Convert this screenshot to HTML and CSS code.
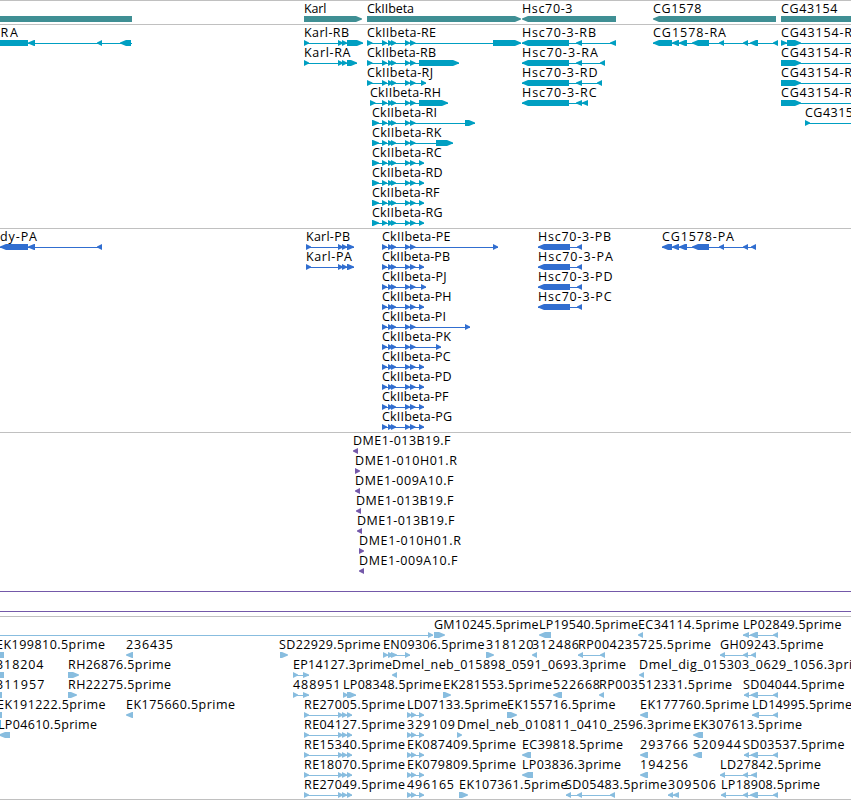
FILE: index.html
```
<!DOCTYPE html>
<html lang="en">
<head>
    <meta charset="UTF-8">
    <title>Genome browser</title>
    <link rel="stylesheet" href="styles.css">
</head>
<body>
    <div class="browser">
        <div class="track genes" id="genes"></div>
        <div class="track transcripts" id="transcripts"></div>
        <div class="track proteins" id="proteins"></div>
        <div class="track primers" id="primers"></div>
        <div class="track ests" id="ests"></div>
    </div>
    <script src="tracks.js"></script>
</body>
</html>
```
FILE: styles.css
```
body {
    margin: 0;
    background-color: #ffffff;
}
.browser {
    display: flex;
    flex-direction: column;
    width: 851px;
    height: 799px;
    border-bottom: 1px solid #c0c0c0;
    overflow: hidden;
}
.track {
    box-sizing: border-box;
    flex: none;
    border-top: 1px solid #c0c0c0;
    overflow: hidden;
}
.track svg {
    display: block;
    width: 851px;
    height: 100%;
}
.track text {
    font-family: "Open Sans", "Noto Sans", sans-serif;
    font-size: 12.5px;
    fill: #000000;
}
.genes {
    height: 24px;
    color: #3f8f94;
}
.transcripts {
    height: 204px;
    color: #009fc2;
}
.proteins {
    height: 204px;
    color: #316ed0;
}
.primers {
    height: 184px;
    color: #7459a9;
}
.ests {
    height: 183px;
    color: #88bddf;
}
.glyph {
    fill: currentColor;
}
```
FILE: tracks.js
```
// feature: [row, label, label start, label end, strand, exons, line start, line end]
// strand: 1 forward, -1 reverse, 0 no arrow head
var ckExons = [[382, 387], [388, 393], [391, 396], [405, 410], [410, 415.5]];
var reExons = [[304, 309], [338, 343], [342, 347], [347, 352]];
var ldExons = [[407, 412], [411, 416], [419, 424]];
var sdExons = [[744, 749], [750.5, 758], [773, 778]];

function ck(first, last) {
    return (first ? [first] : []).concat(ckExons, [last]);
}

var tracks = {
    genes: [
        [0, '', 0, 0, 0, [[0, 132]]],
        [0, 'Karl', 304, 326.5, 1, [[304, 362]]],
        [0, 'CkIIbeta', 367, 414, 1, [[367, 521]]],
        [0, 'Hsc70-3', 522, 572.5, -1, [[522, 616]]],
        [0, 'CG1578', 653, 701.5, -1, [[653, 776]]],
        [0, 'CG43154', 781, 837.5, 0, [[781, 851]]]
    ],
    transcripts: [
        [0, 'RA', 0.5, 18, -1, [[-10, 28], [28, 35], [97, 102], [120, 131]], 0, 132],
        [0, 'Karl-RB', 304, 349, 1, [[304, 309], [338, 343], [342, 347], [347, 363]]],
        [1, 'Karl-RA', 304, 350.5, 1, [[304, 309], [338, 343], [342, 347], [347, 357]]],
        [0, 'CkIIbeta-RE', 367, 436, 1, ck([367, 372.5], [493, 521])],
        [1, 'CkIIbeta-RB', 367, 436, 1, ck([367, 372.5], [419, 459])],
        [2, 'CkIIbeta-RJ', 367, 433, 1, ck([367, 372.5], [421, 426])],
        [3, 'CkIIbeta-RH', 370, 441, 1, ck([370, 375.5], [419, 448])],
        [4, 'CkIIbeta-RI', 372, 437, 1, ck([372, 379], [465, 475])],
        [5, 'CkIIbeta-RK', 372, 441.5, 1, ck([372, 379], [436, 453])],
        [6, 'CkIIbeta-RC', 372, 441.5, 1, ck([372, 379], [419, 424])],
        [7, 'CkIIbeta-RD', 372, 442.5, 1, ck([372, 379], [419, 424])],
        [8, 'CkIIbeta-RF', 372, 439.5, 1, ck([372, 379], [419, 424])],
        [9, 'CkIIbeta-RG', 372, 442.5, 1, ck([372, 379], [419, 424])],
        [0, 'Hsc70-3-RB', 522, 596, -1, [[522, 569], [576, 582], [610, 616]]],
        [1, 'Hsc70-3-RA', 522, 598, -1, [[522, 569], [576, 582], [600, 605]]],
        [2, 'Hsc70-3-RD', 522, 597.5, -1, [[522, 569], [576, 582], [597, 602]]],
        [3, 'Hsc70-3-RC', 522, 596.5, -1, [[522, 569], [576, 582], [582, 588]]],
        [0, 'CG1578-RA', 653, 726, -1, [[653, 672], [672, 679], [679, 687], [692, 709], [719, 724], [743, 748], [750, 758], [773, 778]]],
        [0, 'CG43154-R', 781, 852, 1, [[781, 787], [787, 801]], 781, 851],
        [1, 'CG43154-R', 781, 852, 1, [[781, 801]], 781, 851],
        [2, 'CG43154-R', 781, 852, 1, [[781, 801]], 781, 851],
        [3, 'CG43154-R', 781, 852, 1, [[781, 801]], 781, 851],
        [4, 'CG4315', 805, 853, 1, [[805, 810]], 805, 851]
    ],
    proteins: [
        [0, 'dy-PA', 0, 37, -1, [[0, 28], [28, 35], [97, 102]]],
        [0, 'Karl-PB', 306, 350, 1, [[306, 311], [338, 343], [342, 347], [347, 354]]],
        [1, 'Karl-PA', 306, 352, 1, [[306, 311], [338, 343], [342, 347], [347, 354]]],
        [0, 'CkIIbeta-PE', 382, 450.5, 1, ck(null, [493, 498])],
        [1, 'CkIIbeta-PB', 382, 450, 1, ck(null, [419, 424])],
        [2, 'CkIIbeta-PJ', 382, 446.5, 1, ck(null, [421, 426])],
        [3, 'CkIIbeta-PH', 382, 451.5, 1, ck(null, [419, 424])],
        [4, 'CkIIbeta-PI', 382, 446, 1, ck(null, [465, 470])],
        [5, 'CkIIbeta-PK', 382, 451, 1, ck(null, [436, 441])],
        [6, 'CkIIbeta-PC', 382, 450.5, 1, ck(null, [419, 424])],
        [7, 'CkIIbeta-PD', 382, 451.5, 1, ck(null, [419, 424])],
        [8, 'CkIIbeta-PF', 382, 448.5, 1, ck(null, [419, 424])],
        [9, 'CkIIbeta-PG', 382, 452, 1, ck(null, [419, 424])],
        [0, 'Hsc70-3-PB', 538, 611, -1, [[538, 570], [577, 582]]],
        [1, 'Hsc70-3-PA', 538, 613, -1, [[538, 570], [577, 582]]],
        [2, 'Hsc70-3-PD', 538, 612.5, -1, [[538, 570], [577, 582]]],
        [3, 'Hsc70-3-PC', 538, 611.5, -1, [[538, 570], [577, 582]]],
        [0, 'CG1578-PA', 662, 734, -1, [[662, 672], [672, 679], [679, 687], [692, 709], [719, 724], [743, 748], [751, 756]]]
    ],
    primers: [
        [0, 'DME1-013B19.F', 353, 450.5, -1, [[353, 358]]],
        [1, 'DME1-010H01.R', 355, 457, 1, [[355, 360]]],
        [2, 'DME1-009A10.F', 355, 453.5, -1, [[355, 360]]],
        [3, 'DME1-013B19.F', 356, 453.5, -1, [[356, 361]]],
        [4, 'DME1-013B19.F', 357, 454.5, -1, [[357, 362]]],
        [5, 'DME1-010H01.R', 359, 461, 1, [[359, 364]]],
        [6, 'DME1-009A10.F', 359, 457.5, -1, [[359, 364]]],
        [7, '', 0, 0, 0, [], 0, 851],
        [8, '', 0, 0, 0, [], 0, 851]
    ],
    ests: [
        [0, '', 0, 0, 1, [[428, 433]], 0, 433],
        [0, 'GM10245.5prime', 434, 538.5, 1, [[434, 445]]],
        [0, 'LP19540.5prime', 539, 638, -1, [[539, 551]]],
        [0, 'EC34114.5prime', 638, 739, -1, [[638, 643]]],
        [0, 'LP02849.5prime', 743, 841.5, -1, [[743, 749], [750, 758], [773, 778]]],
        [1, 'EK199810.5prime', -4, 105, -1, [[-8, 4]]],
        [1, '236435', 126, 173, -1, [[126, 133]]],
        [1, 'SD22929.5prime', 279, 380.5, 1, [[280, 288]]],
        [1, 'EN09306.5prime', 383, 484.5, 1, [[383, 388], [388, 394], [391, 397], [405, 410]]],
        [1, '318120', 486, 533.5, 1, [[486, 494]]],
        [1, '312486', 532, 579, -1, [[532, 537]]],
        [1, 'RP004235725.5prime', 578, 711, -1, [[578, 583], [600, 605]]],
        [1, 'GH09243.5prime', 720, 823.5, -1, [[720, 725], [743, 748], [751, 756]]],
        [2, '318204', -4, 43.5, -1, [[-8, 4]]],
        [2, 'RH26876.5prime', 68, 171, 1, [[68, 79]]],
        [2, 'EP14127.3prime', 293, 392, 1, [[293, 298], [303, 309]]],
        [2, 'Dmel_neb_015898_0591_0693.3prime', 392, 626, -1, [[392, 397]]],
        [2, 'Dmel_dig_015303_0629_1056.3prime', 639, 872, -1, [[639, 644]]],
        [3, '311957', -4, 44.5, -1, [[-8, 2]]],
        [3, 'RH22275.5prime', 68, 171, 1, [[68, 77]]],
        [3, '488951', 293, 340.5, 1, [[293, 298], [303, 309]]],
        [3, 'LP08348.5prime', 343, 441.5, 1, [[343, 348], [347, 356]]],
        [3, 'EK281553.5prime', 443, 552, 1, [[443, 451]]],
        [3, '522668', 553, 600, -1, [[553, 562]]],
        [3, 'RP003512331.5prime', 599, 732, -1, [[599, 604]]],
        [3, 'SD04044.5prime', 743, 844.5, -1, sdExons],
        [4, 'EK191222.5prime', -3, 105.5, -1, [[-8, 2]]],
        [4, 'EK175660.5prime', 126, 235, -1, [[126, 133]]],
        [4, 'RE27005.5prime', 304, 405, 1, reExons],
        [4, 'LD07133.5prime', 407, 507.5, 1, ldExons],
        [4, 'EK155716.5prime', 507, 615.5, 1, [[507, 517]]],
        [4, 'EK177760.5prime', 640, 749, -1, [[640, 648]]],
        [4, 'LD14995.5prime', 752, 852, -1, [[752, 759], [773, 778]]],
        [5, 'LP04610.5prime', -2, 97, -1, [[-1, 10]]],
        [5, 'RE04127.5prime', 304, 405, 1, reExons],
        [5, '329109', 407, 455, 1, ldExons],
        [5, 'Dmel_neb_010811_0410_2596.3prime', 457, 691, 1, [[457, 462]]],
        [5, 'EK307613.5prime', 693, 802, -1, [[693, 703]]],
        [6, 'RE15340.5prime', 304, 405, 1, reExons],
        [6, 'EK087409.5prime', 407, 516, 1, ldExons],
        [6, 'EC39818.5prime', 522, 623, -1, [[522, 531]]],
        [6, '293766', 640, 688, -1, [[640, 648]]],
        [6, '520944', 693, 741, -1, [[693, 702]]],
        [6, 'SD03537.5prime', 743, 844.5, -1, sdExons],
        [7, 'RE18070.5prime', 304, 405, 1, reExons],
        [7, 'EK079809.5prime', 407, 516, 1, ldExons],
        [7, 'LP03836.3prime', 522, 621, -1, [[522, 533]]],
        [7, '194256', 640, 688, -1, [[640, 648]]],
        [7, 'LD27842.5prime', 720, 821, -1, [[720, 725], [743, 748], [751, 757]]],
        [8, 'RE27049.5prime', 304, 405, 1, reExons],
        [8, '496165', 407, 454, 1, ldExons],
        [8, 'EK107361.5prime', 459, 567.5, 1, [[459, 468]]],
        [8, 'SD05483.5prime', 565, 667, -1, [[566, 571], [577, 582], [610, 615]]],
        [8, '309506', 668, 716, -1, [[668, 673], [673, 679]]],
        [8, 'LP18908.5prime', 721, 820, -1, [[721, 726], [743, 748], [750, 758], [773, 778]]]
    ]
};

var ROW = 20;
var HEAD = 6;

function add(svg, name, attrs) {
    var el = document.createElementNS('http://www.w3.org/2000/svg', name);
    for (var key in attrs) {
        el.setAttribute(key, attrs[key]);
    }
    svg.appendChild(el);
    return el;
}

function drawExon(svg, a, b, y, strand) {
    var h = Math.min(HEAD, b - a);
    var points;
    if (strand < 0) {
        points = [[b, y], [a + h, y], [a, y + 2.5], [a, y + 3.5], [a + h, y + 6], [b, y + 6]];
    } else if (strand > 0) {
        points = [[a, y], [b - h, y], [b, y + 2.5], [b, y + 3.5], [b - h, y + 6], [a, y + 6]];
    } else {
        points = [[a, y], [b, y], [b, y + 6], [a, y + 6]];
    }
    add(svg, 'polygon', { 'class': 'glyph', points: points.join(' ') });
}

function drawTrack(id) {
    var svg = add(document.getElementById(id), 'svg', {});
    tracks[id].forEach(function (f) {
        // the track's top border takes the first pixel
        var top = f[0] * ROW - 1;
        var exons = f[5];
        var from = f[6] !== undefined ? f[6] : exons[0][0];
        var to = f[7] !== undefined ? f[7] : exons[exons.length - 1][1];
        if (exons.length !== 1 || f[6] !== undefined) {
            add(svg, 'rect', { 'class': 'glyph', x: from, y: top + 19, width: to - from, height: 1 });
        }
        exons.forEach(function (e) {
            drawExon(svg, e[0], e[1], top + 16, f[4]);
        });
        if (f[1]) {
            add(svg, 'text', { x: f[2], y: top + 13, textLength: f[3] - f[2] }).textContent = f[1];
        }
    });
}

Object.keys(tracks).forEach(drawTrack);
```
